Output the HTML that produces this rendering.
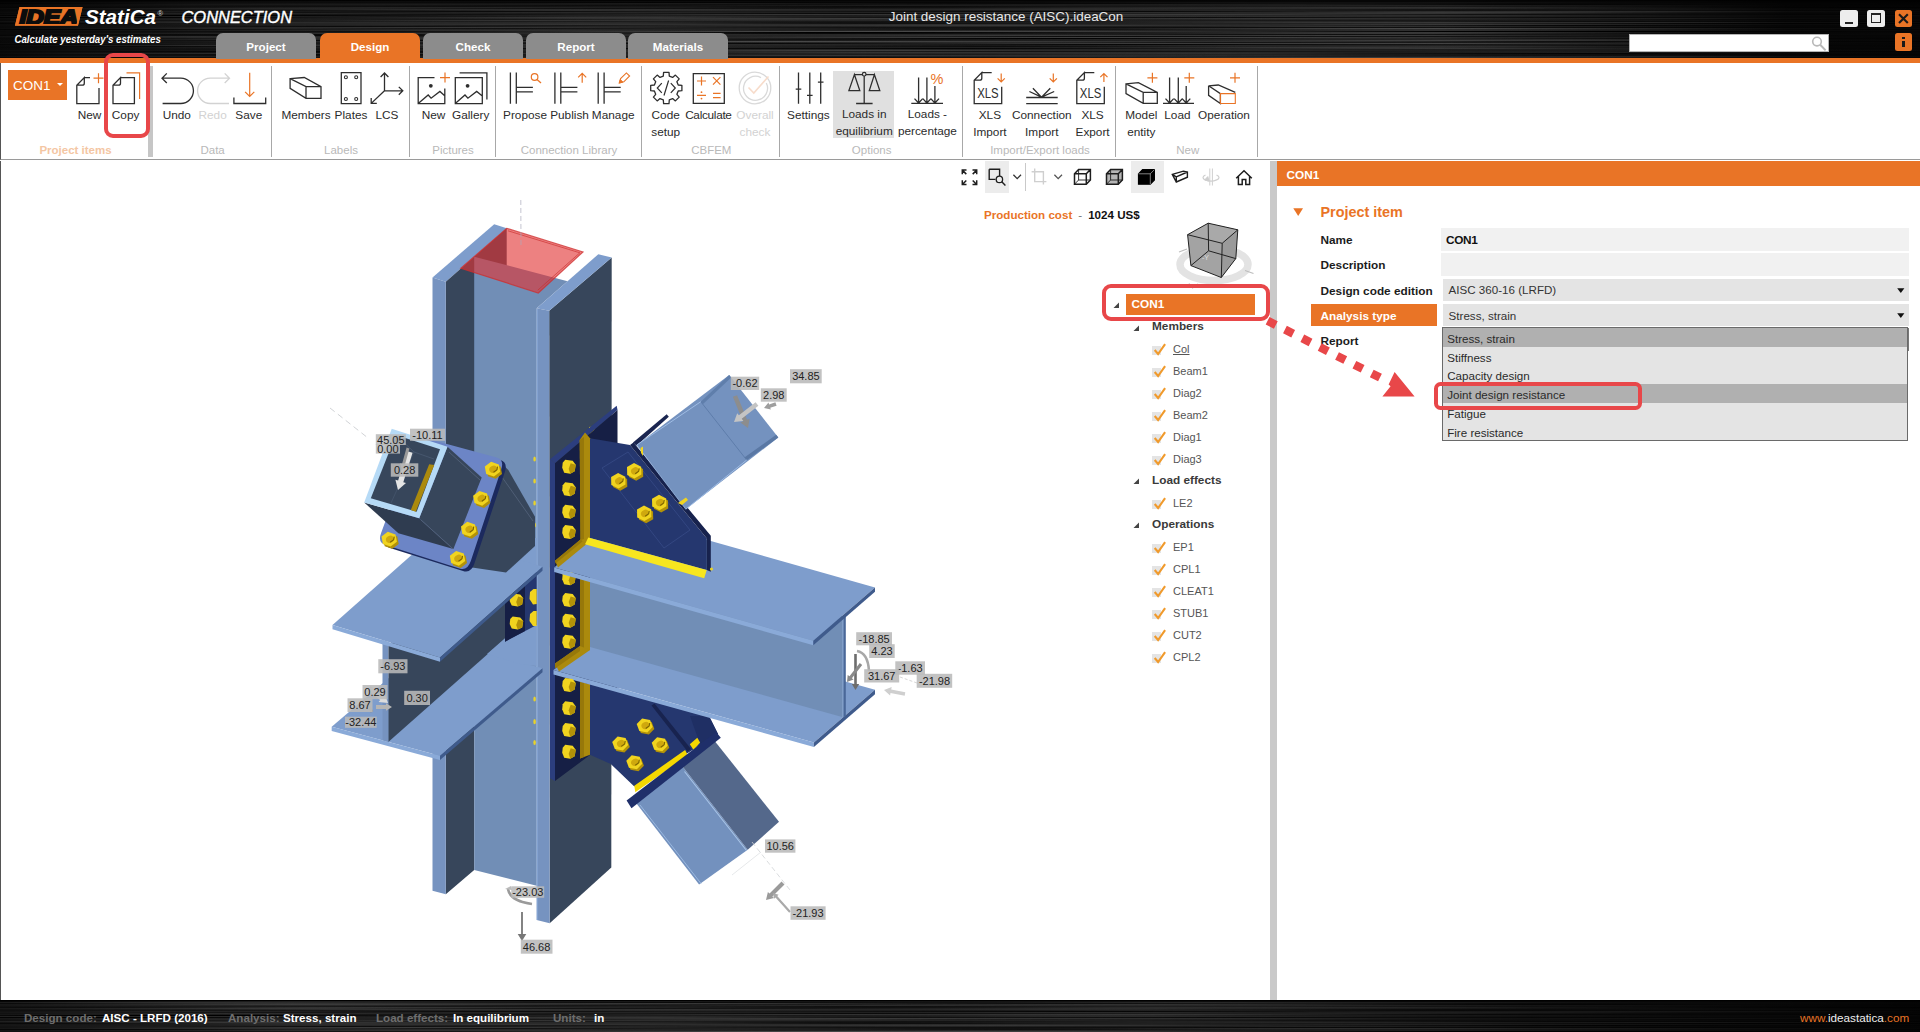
<!DOCTYPE html>
<html lang="en">
<head>
<meta charset="utf-8">
<title>IDEA StatiCa Connection</title>
<style>
*{box-sizing:border-box;margin:0;padding:0}
html,body{width:1920px;height:1032px;overflow:hidden;background:#fff}
body{font-family:"Liberation Sans",sans-serif;font-size:12px;color:#222;position:relative}
.abs{position:absolute}
#app{position:absolute;left:0;top:0;width:1920px;height:1032px;overflow:hidden;background:#fff}
.metal{background-color:#0d0d0d;
 background-image:
  linear-gradient(90deg,rgba(0,0,0,.55) 0,rgba(0,0,0,.15) 12%,rgba(0,0,0,.45) 24%,rgba(0,0,0,.05) 40%,rgba(0,0,0,.35) 52%,rgba(0,0,0,0) 70%,rgba(0,0,0,.1) 80%,rgba(0,0,0,.55) 100%),
  repeating-linear-gradient(180deg,#1f1f1f 0,#161616 1px,#262626 2px,#101010 3px,#1d1d1d 4px,#2a2a2a 5px,#141414 6px,#222 7px)}
#hdr{left:0;top:0;width:1920px;height:58px}
#oband{left:0;top:58px;width:1920px;height:5px;background:#e97426}
.tab{position:absolute;top:33px;height:26px;width:100px;border-radius:7px 7px 0 0;background:#8c8c8c;color:#fff;font-weight:bold;font-size:11.6px;text-align:center;line-height:27.8px}
.tab.on{background:#e97426}
#ribbon{left:0;top:63px;width:1920px;height:97px;background:#fff;border-bottom:1px solid #9a9a9a;border-left:1px solid #555}
.rl{position:absolute;font-size:11.8px;color:#2b2b2b;white-space:nowrap;text-align:center;transform:translateX(-50%);line-height:17px}
.rl.dis{color:#d2d2d2}
.gl{position:absolute;top:143px;font-size:11.5px;color:#b9b9b9;white-space:nowrap;transform:translateX(-50%);line-height:14px}
.vsep{position:absolute;top:65.5px;height:91.5px;width:1px;background:#a8a8a8}
#status{left:0;top:1000px;width:1920px;height:32px}
.st{position:absolute;top:1010px;font-size:11.6px;line-height:15px;font-weight:bold;white-space:nowrap}
.st.k{color:#6e6e6e}.st.v{color:#fff}
.tb{font-size:11.8px;font-weight:bold;line-height:16px;white-space:nowrap}
.ti{font-size:11px;line-height:16px;white-space:nowrap;color:#555}
.dd{font-size:11.6px;line-height:16px;white-space:nowrap;color:#333}
</style>
</head>
<body>
<div id="app">
<!-- HEADER -->
<div id="hdr" class="abs" style="background:#0a0a0a"></div>
<svg class="abs" style="left:0;top:0" width="1920" height="58"><defs><filter id="bm" x="0" y="0" width="100%" height="100%" color-interpolation-filters="sRGB"><feTurbulence type="fractalNoise" baseFrequency="0.0016 0.85" numOctaves="2" seed="7"/><feColorMatrix type="matrix" values="0.5 0 0 0 -0.1  0.5 0 0 0 -0.1  0.5 0 0 0 -0.1  0 0 0 0 1"/></filter>
<linearGradient id="hg" x1="0" x2="1" y1="0" y2="0"><stop offset="0" stop-color="#000" stop-opacity=".75"/><stop offset=".1" stop-color="#000" stop-opacity=".35"/><stop offset=".3" stop-color="#000" stop-opacity=".05"/><stop offset=".75" stop-color="#000" stop-opacity=".0"/><stop offset=".86" stop-color="#000" stop-opacity=".45"/><stop offset=".93" stop-color="#000" stop-opacity=".8"/><stop offset="1" stop-color="#000" stop-opacity=".85"/></linearGradient>
<linearGradient id="hv" x1="0" x2="0" y1="0" y2="1"><stop offset="0" stop-color="#000" stop-opacity=".95"/><stop offset=".06" stop-color="#000" stop-opacity=".55"/><stop offset=".18" stop-color="#000" stop-opacity="0"/><stop offset="1" stop-color="#000" stop-opacity="0.1"/></linearGradient></defs>
<rect width="1920" height="58" filter="url(#bm)"/><rect width="1920" height="58" fill="url(#hg)"/><rect width="1920" height="58" fill="url(#hv)"/></svg>
<div id="oband" class="abs"></div>
<div class="tab" style="left:216px">Project</div>
<div class="tab on" style="left:320px">Design</div>
<div class="tab" style="left:423px">Check</div>
<div class="tab" style="left:526px">Report</div>
<div class="tab" style="left:628px">Materials</div>
<div class="abs" style="left:0;width:1920px;top:8.3px;text-align:center;color:#e8e8e8;font-size:13.45px;line-height:18px;padding-left:92px">Joint design resistance (AISC).ideaCon</div>
<svg class="abs" style="left:0;top:0" width="320" height="58" viewBox="0 0 320 58">
<path d="M19.5 7L82.5 7L78 25.6L15 25.6Z" fill="#e97426"/>
<text x="19.4" y="23.5" font-family="Liberation Sans,sans-serif" font-weight="bold" font-style="italic" font-size="19.4" fill="#0c0c0c" stroke="#0c0c0c" stroke-width="2" stroke-linejoin="miter" textLength="58.5" lengthAdjust="spacingAndGlyphs">IDEA</text>
<path d="M20.2 7.8L81.5 7.8L77.3 24.8L16 24.8Z" fill="none" stroke="#e97426" stroke-width="1.7"/>
<text x="85" y="23.8" font-family="Liberation Sans,sans-serif" font-weight="bold" font-style="italic" font-size="20" fill="#fff" textLength="71" lengthAdjust="spacingAndGlyphs">StatiCa</text>
<text x="157.5" y="15.5" font-family="Liberation Sans,sans-serif" font-size="7.5" fill="#ddd">®</text>
<text x="181.5" y="22.6" font-family="Liberation Sans,sans-serif" font-style="italic" font-size="16.6" fill="#fff" stroke="#fff" stroke-width="0.4" textLength="110.5" lengthAdjust="spacingAndGlyphs">CONNECTION</text>
<text x="14.4" y="42.6" font-family="Liberation Sans,sans-serif" font-weight="bold" font-style="italic" font-size="10.4" fill="#fff" textLength="146.5" lengthAdjust="spacingAndGlyphs">Calculate yesterday's estimates</text>
</svg>

<div class="abs" style="left:1840px;top:10px;width:17.5px;height:17px;background:#ededed;border-radius:2.5px"></div>
<div class="abs" style="left:1844.5px;top:21.5px;width:8.5px;height:2px;background:#222"></div>
<div class="abs" style="left:1867.3px;top:10px;width:17.7px;height:17px;background:#ededed;border-radius:2.5px"></div>
<div class="abs" style="left:1871.3px;top:13.2px;width:10px;height:10px;border:1.6px solid #222;border-top-width:2.6px"></div>
<div class="abs" style="left:1895px;top:10px;width:16.8px;height:17px;background:#e97426;border-radius:2.5px"></div>
<svg class="abs" style="left:1895px;top:10px" width="17" height="17"><path d="M4 4.2L12.8 13M12.8 4.2L4 13" stroke="#1a1a1a" stroke-width="2.1"/></svg>
<div class="abs" style="left:1895px;top:33.3px;width:16.8px;height:17.4px;background:#e97426;border-radius:2.5px"></div>
<div class="abs" style="left:1902.2px;top:40.8px;width:2.4px;height:6.4px;background:#1a1a1a"></div><div class="abs" style="left:1902.2px;top:36.8px;width:2.4px;height:2.4px;background:#1a1a1a"></div>
<div class="abs" style="left:1629.3px;top:34px;width:200px;height:18.4px;background:#fff;border:1px solid #b4b4b4"></div>
<svg class="abs" style="left:1808px;top:34px" width="22" height="19"><circle cx="9" cy="7.6" r="4.3" stroke="#b9b9b9" stroke-width="1.6" fill="none"/><path d="M12.2 10.8L17.6 16.4" stroke="#b9b9b9" stroke-width="2"/></svg>

<!-- RIBBON -->
<div id="ribbon" class="abs"></div>
<!--RIBBON_START-->
<div class="abs" style="left:833px;top:71px;width:61px;height:67px;background:#e0e0e0"></div>
<div class="abs" style="left:8px;top:70px;width:59px;height:29.5px;background:#e97426"></div><div class="abs" style="left:13px;top:77px;font-size:13.5px;color:#fff;line-height:17px">CON1</div><div class="abs" style="left:56.5px;top:83px;width:0;height:0;border-left:3px solid transparent;border-right:3px solid transparent;border-top:3.5px solid #fff"></div>
<div class="abs" style="left:148px;top:66px;width:4.5px;height:91px;background:#c6c6c6"></div>
<div class="vsep" style="left:271.0px"></div>
<div class="vsep" style="left:408.8px"></div>
<div class="vsep" style="left:494.7px"></div>
<div class="vsep" style="left:640.7px"></div>
<div class="vsep" style="left:778.6px"></div>
<div class="vsep" style="left:962.0px"></div>
<div class="vsep" style="left:1115.3px"></div>
<div class="vsep" style="left:1256.5px"></div>
<svg class="abs" style="left:0;top:0" width="1920" height="165" viewBox="0 0 1920 165" stroke-linecap="butt">
<path d="M84.3 77.6H90M99 88V103.7H76.8V85.2L84.3 77.6V83.2Q84.3 85.2 82.3 85.2H76.8" stroke="#2e2e2e" stroke-width="1.3" fill="none" />
<path d="M93.5 78.2H103.5M98.5 73.2V83.2" stroke="#e97426" stroke-width="1.2" fill="none" />
<path d="M120.5 77.6H134.4V103.7H113V85.2L120.5 77.6V83.2Q120.5 85.2 118.5 85.2H113" stroke="#2e2e2e" stroke-width="1.3" fill="none" />
<path d="M126.5 72.8H139.6V99" stroke="#e97426" stroke-width="1.2" fill="none" />
<path d="M162 78.2H180.8A12.65 12.65 0 0 1 180.8 103.5H162.6M166.8 73.4L162 78.2L166.8 83" stroke="#2e2e2e" stroke-width="1.3" fill="none" />
<path d="M229.5 78.2H210.2A12.65 12.65 0 0 0 210.2 103.5H229M224.7 73.4L229.5 78.2L224.7 83" stroke="#d2d2d2" stroke-width="1.3" fill="none" />
<path d="M233.9 97.6V103.5H265.7V97.6" stroke="#2e2e2e" stroke-width="1.3" fill="none" />
<path d="M249.7 72.8V96.4M245.1 91.80000000000001L249.7 96.4L254.29999999999998 91.80000000000001" stroke="#e97426" stroke-width="1.2" fill="none" />
<path d="M290.1 78.7L304.3 77.5L321 86.7V98.4H306L290.1 88.4ZM290.1 78.7L306 86.7H321M306 86.7V98.4" stroke="#2e2e2e" stroke-width="1.3" fill="none" />
<path d="M341.3 72.6H361V103.6H341.3Z" stroke="#2e2e2e" stroke-width="1.3" fill="none" />
<circle cx="345.9" cy="77.3" r="1.5" stroke="#2e2e2e" stroke-width="1.1" fill="none"/>
<circle cx="345.9" cy="99" r="1.5" stroke="#2e2e2e" stroke-width="1.1" fill="none"/>
<circle cx="356.2" cy="77.3" r="1.5" stroke="#2e2e2e" stroke-width="1.1" fill="none"/>
<circle cx="356.2" cy="99" r="1.5" stroke="#2e2e2e" stroke-width="1.1" fill="none"/>
<path d="M384.5 90.8V73M380.6 77L384.5 73L388.4 77M384.5 90.8H402.8M398.8 86.9L402.8 90.8L398.8 94.7M384.5 90.8L371.2 103.4M371.2 98L371.2 103.4L376.8 103.4" stroke="#2e2e2e" stroke-width="1.3" fill="none" />
<path d="M434.5 77.6H418.2V103.7H444.8V88.5M418.8 103L428.2 95L431.1 98.2L439.9 91.4L444.7 95.7" stroke="#2e2e2e" stroke-width="1.3" fill="none" />
<circle cx="430.8" cy="85.8" r="1.9" fill="#2e2e2e"/>
<path d="M440 77.6H450M445 72.6V82.6" stroke="#e97426" stroke-width="1.2" fill="none" />
<path d="M455.3 77.6H482.3V103.7H455.3ZM455.8 103L465 95L467.9 98.2L476.7 91.4L482 95.7M459.6 72.8H486.9V99.4" stroke="#2e2e2e" stroke-width="1.3" fill="none" />
<circle cx="467.6" cy="85.8" r="1.9" fill="#2e2e2e"/>
<path d="M510.4 72.4V103.7M516.3 72.4V103.7M516.3 87.4H532.9M516.3 91.8H532.9" stroke="#2e2e2e" stroke-width="1.3" fill="none" />
<path d="M554.9 72.4V103.7M560.8 72.4V103.7M560.8 87.4H577.4M560.8 91.8H577.4" stroke="#2e2e2e" stroke-width="1.3" fill="none" />
<path d="M598.2 72.4V103.7M604.1 72.4V103.7M604.1 87.4H620.7M604.1 91.8H620.7" stroke="#2e2e2e" stroke-width="1.3" fill="none" />
<circle cx="534.6" cy="77" r="3.3" stroke="#e97426" stroke-width="1.2" fill="none"/>
<path d="M537 79.4L541 83" stroke="#e97426" stroke-width="1.3" fill="none" />
<path d="M582.2 82.8V73.4M578.2 77.4L582.2 73.4L586.2 77.4" stroke="#e97426" stroke-width="1.2" fill="none" />
<path d="M619.3 83L620.6 78.6L626.4 72.9L629.6 76L623.8 81.8Z" stroke="#e97426" stroke-width="1.1" fill="none" />
<path d="M619.3 83L620.3 79.6L622.8 82Z" stroke="#e97426" stroke-width="1" fill="#e97426" />
<path d="M663.3 76.1 L663.6 72.4 L669.0 72.4 L669.3 76.1 L672.6 77.4 L675.4 75.1 L679.2 78.9 L676.9 81.7 L678.2 85.0 L681.9 85.3 L681.9 90.7 L678.2 91.0 L676.9 94.3 L679.2 97.1 L675.4 100.9 L672.6 98.6 L669.3 99.9 L669.0 103.6 L663.6 103.6 L663.3 99.9 L660.0 98.6 L657.2 100.9 L653.4 97.1 L655.7 94.3 L654.4 91.0 L650.7 90.7 L650.7 85.3 L654.4 85.0 L655.7 81.7 L653.4 78.9 L657.2 75.1 L660.0 77.4Z" stroke="#2e2e2e" stroke-width="1.3" fill="none" stroke-linejoin="round"/>
<path d="M661.8 83.2L657.3 88L661.8 92.8M670.8 83.2L675.3 88L670.8 92.8M668.6 80.5L664 95.5" stroke="#2e2e2e" stroke-width="1.2" fill="none" />
<path d="M693.3 73.6H724.3V103.3H693.3Z" stroke="#2e2e2e" stroke-width="1.3" fill="none" />
<path d="M697 81H706M701.5 76.5V85.5M713 77.2L720.4 84.6M720.4 77.2L713 84.6M697 95.4H706M713 93.4H720.6M713 97.6H720.6" stroke="#e97426" stroke-width="1.2" fill="none" />
<circle cx="701.5" cy="92.2" r="0.9" fill="#e97426"/><circle cx="701.5" cy="98.6" r="0.9" fill="#e97426"/>
<circle cx="755" cy="88" r="15.8" stroke="#d9d9d9" stroke-width="1.3" fill="none"/>
<path d="M766.3 83A12 12 0 1 1 761 77.6" stroke="#d9d9d9" stroke-width="1.3" fill="none" />
<path d="M748.5 87.5L753.8 93L768.5 76.5" stroke="#f7dccb" stroke-width="1.6" fill="none" />
<path d="M798.5 72.4V103.7M809.8 72.4V103.7M820.7 72.4V103.7M795.7 89.2H801.3M807 95.4H812.6M817.9 82.2H823.5" stroke="#2e2e2e" stroke-width="1.3" fill="none" />
<path d="M854.4 74.6H874.4M864.2 76V103.3M856.1 103.5H872.6M854.4 74.6L848.9 90.6H859.8ZM874.4 74.6L869.3 90.6H879.8Z" stroke="#2e2e2e" stroke-width="1.3" fill="none" />
<circle cx="864.2" cy="74.2" r="1.8" stroke="#2e2e2e" stroke-width="1.2" fill="#e0e0e0"/>
<path d="M911.3000000000001 103.4H943.0M918.6 77.5V103M914.5 98.6L918.6 103L922.7 98.6M926.9 77.5V103M922.8 98.6L926.9 103L931.0 98.6M934.9 86V103M930.8 98.6L934.9 103L939.0 98.6" stroke="#2e2e2e" stroke-width="1.3" fill="none" />
<text x="930.6" y="83.6" font-size="14.5" fill="#e97426" font-family="Liberation Sans,sans-serif">%</text>
<path d="M981.8000000000001 72.6H991.7M1001.7 86.8V103.6H974.2V80.2L981.8000000000001 72.6V78.2Q981.8000000000001 80.2 979.8000000000001 80.2H974.2" stroke="#2e2e2e" stroke-width="1.3" fill="none" />
<text x="977.2" y="98.2" font-size="14" fill="#2e2e2e" font-family="Liberation Sans,sans-serif" textLength="21.5" lengthAdjust="spacingAndGlyphs">XLS</text>
<path d="M1001.2 73.6V82M997.6 78.4L1001.2 82L1004.8000000000001 78.4" stroke="#e97426" stroke-width="1.2" fill="none" />
<path d="M1084.3999999999999 72.6H1094.3M1104.3 86.8V103.6H1076.8V80.2L1084.3999999999999 72.6V78.2Q1084.3999999999999 80.2 1082.3999999999999 80.2H1076.8" stroke="#2e2e2e" stroke-width="1.3" fill="none" />
<text x="1079.8" y="98.2" font-size="14" fill="#2e2e2e" font-family="Liberation Sans,sans-serif" textLength="21.5" lengthAdjust="spacingAndGlyphs">XLS</text>
<path d="M1103.8999999999999 82V73.6M1100.3 77.19999999999999L1103.8999999999999 73.6L1107.4999999999998 77.19999999999999" stroke="#e97426" stroke-width="1.2" fill="none" />
<path d="M1026.2 97.5H1057.7M1026.2 103.6H1057.7M1041.5 97.2L1029.4 91.5M1041.5 97.2L1032.9 88.2M1041.5 97.2L1050.3 88.2M1041.5 97.2L1054.2 91.5" stroke="#2e2e2e" stroke-width="1.3" fill="none" />
<path d="M1053.3 73.6V82M1049.7 78.4L1053.3 82L1056.8999999999999 78.4" stroke="#e97426" stroke-width="1.2" fill="none" />
<path d="M1126 83.9L1138.4 82.6L1157.3 92.3V103.4H1143.2L1126 93.6ZM1126 83.9L1143.2 92.3H1157.3M1143.2 92.3V103.4" stroke="#2e2e2e" stroke-width="1.3" fill="none" />
<path d="M1147.4 77.8H1157.4M1152.4 72.8V82.8" stroke="#e97426" stroke-width="1.2" fill="none" />
<path d="M1163 103.4H1194M1169.6 77.5V103M1165.5 98.6L1169.6 103L1173.6999999999998 98.6M1178.3 77.5V103M1174.2 98.6L1178.3 103L1182.3999999999999 98.6M1186.2 86V103M1182.1000000000001 98.6L1186.2 103L1190.3 98.6" stroke="#2e2e2e" stroke-width="1.3" fill="none" />
<path d="M1184.3 77.8H1194.3M1189.3 72.8V82.8" stroke="#e97426" stroke-width="1.2" fill="none" />
<path d="M1208.6 85.8L1218.3 85L1235.3 92.3M1208.6 85.8V95.4L1220.4 103.5V93.6L1208.6 85.8" stroke="#2e2e2e" stroke-width="1.3" fill="none" />
<path d="M1220.4 93.6H1235.3V103.5H1220.4Z" stroke="#e97426" stroke-width="1.1" fill="none" />
<path d="M1230 77.8H1240M1235 72.8V82.8" stroke="#e97426" stroke-width="1.2" fill="none" />
</svg>
<div class="rl" style="left:89.5px;top:106.5px">New</div>
<div class="rl" style="left:125.6px;top:106.5px">Copy</div>
<div class="rl" style="left:176.8px;top:106.5px">Undo</div>
<div class="rl dis" style="left:212.6px;top:106.5px">Redo</div>
<div class="rl" style="left:248.8px;top:106.5px">Save</div>
<div class="rl" style="left:306px;top:106.5px">Members</div>
<div class="rl" style="left:351px;top:106.5px">Plates</div>
<div class="rl" style="left:387px;top:106.5px">LCS</div>
<div class="rl" style="left:433.5px;top:106.5px">New</div>
<div class="rl" style="left:470.7px;top:106.5px">Gallery</div>
<div class="rl" style="left:525px;top:106.5px">Propose</div>
<div class="rl" style="left:569.5px;top:106.5px">Publish</div>
<div class="rl" style="left:613.2px;top:106.5px">Manage</div>
<div class="rl" style="left:665.7px;top:106.5px">Code<br>setup</div>
<div class="rl" style="left:708.4px;top:106.5px"><span style="letter-spacing:-0.3px">Calculate</span></div>
<div class="rl dis" style="left:755px;top:106.5px">Overall<br>check</div>
<div class="rl" style="left:808.4px;top:106.5px">Settings</div>
<div class="rl" style="left:864.2px;top:106px">Loads in<br>equilibrium</div>
<div class="rl" style="left:927.4px;top:106px">Loads -<br>percentage</div>
<div class="rl" style="left:989.9px;top:106.5px">XLS<br>Import</div>
<div class="rl" style="left:1041.8px;top:106.5px">Connection<br>Import</div>
<div class="rl" style="left:1092.6px;top:106.5px">XLS<br>Export</div>
<div class="rl" style="left:1141.3px;top:106.5px">Model<br>entity</div>
<div class="rl" style="left:1177.4px;top:106.5px">Load</div>
<div class="rl" style="left:1224px;top:106.5px">Operation</div>
<div class="gl" style="left:75.5px;color:#f4c6a3;font-weight:bold">Project items</div>
<div class="gl" style="left:212.6px">Data</div>
<div class="gl" style="left:341px">Labels</div>
<div class="gl" style="left:453px">Pictures</div>
<div class="gl" style="left:569px">Connection Library</div>
<div class="gl" style="left:711.3px">CBFEM</div>
<div class="gl" style="left:871.7px">Options</div>
<div class="gl" style="left:1040px">Import/Export loads</div>
<div class="gl" style="left:1187.7px">New</div>
<!--RIBBON_END-->
<!-- MAIN -->
<!--VIEWPORT_START-->
<svg class="abs" style="left:300px;top:190px" width="700" height="790" viewBox="300 190 700 790" shape-rendering="geometricPrecision">
<polygon points="432.5,277.5 494.2,224.2 506.7,228.3 445.8,281.7" fill="#7e9dcc" />
<polygon points="445.8,281.7 506.7,228.3 506.7,600.0 474.2,600.0 474.2,870.0 445.8,894.2" fill="#37465b" />
<polygon points="432.5,277.5 445.8,281.7 445.8,894.2 432.5,890.8" fill="#7693c0" />
<polygon points="474.2,256.7 567.5,281.2 536.7,308.3 536.7,885.8 474.2,870.0" fill="#718eb6" />
<polygon points="549.2,310.8 611.7,257.5 611.3,867.5 549.7,923.3" fill="#37465b" />
<polygon points="536.7,308.3 549.2,310.8 611.7,257.5 598.3,254.2" fill="#7e9dcc" />
<polygon points="536.7,308.3 549.2,310.8 549.7,923.3 536.7,920.0" fill="#7693c0" />
<polyline points="537.2,309.0 537.2,920.0" fill="none" stroke="#8fb0dd" stroke-width="0.8" />
<ellipse cx="534.6" cy="459" rx="1.3" ry="2.6" fill="#e8d22a"/>
<ellipse cx="534.6" cy="481" rx="1.3" ry="2.6" fill="#e8d22a"/>
<ellipse cx="534.6" cy="503" rx="1.3" ry="2.6" fill="#e8d22a"/>
<ellipse cx="534.6" cy="525" rx="1.3" ry="2.6" fill="#e8d22a"/>
<ellipse cx="534.6" cy="699" rx="1.3" ry="2.6" fill="#e8d22a"/>
<ellipse cx="534.6" cy="721.7" rx="1.3" ry="2.6" fill="#e8d22a"/>
<ellipse cx="534.6" cy="742.5" rx="1.3" ry="2.6" fill="#e8d22a"/>
<polygon points="506.7,228.3 583.0,251.9 538.3,293.0 460.8,268.3" fill="rgba(226,52,52,0.62)" stroke="rgba(205,45,45,0.75)" stroke-width="1.2"/>
<polyline points="508.0,230.8 579.8,252.8 537.8,290.2" fill="none" stroke="rgba(200,40,40,0.6)" stroke-width="1" />
<polyline points="520.8,200.0 521.0,247.0" fill="none" stroke="#aab" stroke-width="0.7" stroke-dasharray="5 3"/>
<polygon points="331.7,726.7 440.0,755.8 542.5,668.3 434.2,639.2" fill="#7e9dcc" />
<polygon points="331.7,726.7 440.0,755.8 440.0,760.0 331.7,731.0" fill="#8aaad8" />
<polygon points="440.0,755.8 542.5,668.3 542.5,672.3 440.0,760.0" fill="#3f5b8c" />
<polygon points="388.3,645.0 505.0,545.0 505.0,638.7 388.3,742.0" fill="#37465b" />
<polygon points="382.5,640.0 388.3,642.0 388.3,742.0 382.5,740.3" fill="#7693c0" />
<polygon points="487.0,654.0 505.0,638.2 536.7,624.0 536.7,666.0 520.0,664.0" fill="#7e9dcc" />
<polygon points="505.0,580.0 536.7,572.0 536.7,625.0 505.0,641.7" fill="#25376f" />
<polygon points="505.0,580.0 525.0,575.0 525.0,631.0 505.0,641.7" fill="#161f45" />
<polygon points="512.7,593.4 520.2,594.4 523.2,598.0 522.2,604.5 517.7,606.6 511.7,605.6 509.7,601.0 510.2,596.0" fill="#f1d41f" />
<polygon points="518.2,596.5 523.2,598.0 522.2,604.5 517.7,606.6 516.2,602.0" fill="#b39208" />
<polygon points="512.7,616.4 520.2,617.4 523.2,621.0 522.2,627.5 517.7,629.6 511.7,628.6 509.7,624.0 510.2,619.0" fill="#f1d41f" />
<polygon points="518.2,619.5 523.2,621.0 522.2,627.5 517.7,629.6 516.2,625.0" fill="#b39208" />
<polygon points="530.0,592.0 533.5,589.0 536.7,589.0 536.7,604.0 533.0,604.5 529.5,599.0" fill="#f1d41f" />
<polygon points="530.0,614.0 533.5,611.0 536.7,611.0 536.7,626.0 533.0,626.0 529.5,621.0" fill="#f1d41f" />
<polygon points="476.0,538.0 536.7,538.0 536.7,566.0 476.0,548.0" fill="#7e9dcc" />
<polygon points="332.5,625.0 440.0,657.5 542.5,566.7 435.0,534.2" fill="#7e9dcc" />
<polygon points="332.5,625.0 440.0,657.5 440.0,661.7 332.5,629.2" fill="#8aaad8" />
<polygon points="440.0,657.5 542.5,566.7 542.5,570.7 440.0,661.7" fill="#3f5b8c" />
<polygon points="500.0,462.0 508.3,470.0 535.0,516.7 535.0,546.0 506.0,572.5 462.0,566.0" fill="#37465b" />
<polyline points="497.0,470.0 533.0,521.0" fill="none" stroke="#55657c" stroke-width="0.8" />
<path d="M417.0 448.2Q420.6 438.6 428.5 440.7L500.2 460.0Q508.1 462.1 504.8 472.1L474.4 563.6Q471.1 573.6 463.0 571.0L389.2 547.7Q381.1 545.1 384.7 535.5Z" fill="#1c2a5e"/>
<path d="M413.4 445.6Q417.0 436.0 424.9 438.1L496.6 457.4Q504.5 459.5 501.2 469.5L470.8 561.0Q467.5 571.0 459.4 568.4L385.6 545.1Q377.5 542.5 381.1 532.9Z" fill="#6c85c6"/>
<polygon points="364.2,502.5 419.2,518.3 453.4,549.1 398.4,533.3" fill="#2f3c50" />
<polygon points="447.5,446.7 481.7,477.5 453.4,549.1 419.2,518.3" fill="#37465b" />
<polyline points="449.0,452.0 480.0,480.0" fill="none" stroke="#55657c" stroke-width="0.8" />
<polyline points="421.0,520.0 453.0,549.0" fill="none" stroke="#55657c" stroke-width="0.8" />
<polygon points="391.7,428.7 447.5,446.7 419.2,518.3 364.2,502.5" fill="#b6daf6" />
<polygon points="395.8,435.0 440.0,449.2 416.7,511.7 370.8,498.3" fill="#37465b" />
<polygon points="429.2,464.2 434.2,465.0 415.8,511.7 410.8,510.0" fill="#ab8a0d" />
<polyline points="397.0,436.0 414.0,452.0 434.0,459.0" fill="none" stroke="#4a5a72" stroke-width="0.8" />
<polyline points="414.0,452.0 391.0,503.0" fill="none" stroke="#4a5a72" stroke-width="0.6" />
<polygon points="502.0,474.0 495.7,478.8 488.0,476.2 486.6,468.8 492.9,464.0 500.6,466.6" fill="#b39208" />
<polygon points="500.2,471.8 493.9,476.6 486.2,474.0 484.8,466.6 491.1,461.8 498.8,464.4" fill="#f1d41f" />
<ellipse cx="493.1" cy="469.6" rx="4.1" ry="3.4" fill="#cfa80e" transform="rotate(-30 492.5 469.2)"/>
<path d="M493.5 472.2l3.5 -2.5l0.5 -3" stroke="#7d6500" stroke-width="1.1" fill="none"/>
<polygon points="490.3,503.1 484.0,507.9 476.3,505.3 474.9,497.9 481.2,493.1 488.9,495.7" fill="#b39208" />
<polygon points="488.5,500.9 482.2,505.7 474.5,503.1 473.1,495.7 479.4,490.9 487.1,493.5" fill="#f1d41f" />
<ellipse cx="481.4" cy="498.7" rx="4.1" ry="3.4" fill="#cfa80e" transform="rotate(-30 480.8 498.3)"/>
<path d="M481.8 501.3l3.5 -2.5l0.5 -3" stroke="#7d6500" stroke-width="1.1" fill="none"/>
<polygon points="478.2,534.0 471.9,538.8 464.2,536.2 462.8,528.8 469.1,524.0 476.8,526.6" fill="#b39208" />
<polygon points="476.4,531.8 470.1,536.6 462.4,534.0 461.0,526.6 467.3,521.8 475.0,524.4" fill="#f1d41f" />
<ellipse cx="469.3" cy="529.6" rx="4.1" ry="3.4" fill="#cfa80e" transform="rotate(-30 468.7 529.2)"/>
<path d="M469.7 532.2l3.5 -2.5l0.5 -3" stroke="#7d6500" stroke-width="1.1" fill="none"/>
<polygon points="467.0,563.1 460.7,567.9 453.0,565.3 451.6,557.9 457.9,553.1 465.6,555.7" fill="#b39208" />
<polygon points="465.2,560.9 458.9,565.7 451.2,563.1 449.8,555.7 456.1,550.9 463.8,553.5" fill="#f1d41f" />
<ellipse cx="458.1" cy="558.7" rx="4.1" ry="3.4" fill="#cfa80e" transform="rotate(-30 457.5 558.3)"/>
<path d="M458.5 561.3l3.5 -2.5l0.5 -3" stroke="#7d6500" stroke-width="1.1" fill="none"/>
<polygon points="398.7,544.0 392.4,548.8 384.7,546.2 383.3,538.8 389.6,534.0 397.3,536.6" fill="#b39208" />
<polygon points="396.9,541.8 390.6,546.6 382.9,544.0 381.5,536.6 387.8,531.8 395.5,534.4" fill="#f1d41f" />
<ellipse cx="389.8" cy="539.6" rx="4.1" ry="3.4" fill="#cfa80e" transform="rotate(-30 389.2 539.2)"/>
<path d="M390.2 542.2l3.5 -2.5l0.5 -3" stroke="#7d6500" stroke-width="1.1" fill="none"/>
<polyline points="330.0,408.0 368.0,438.0" fill="none" stroke="#c5c8cc" stroke-width="0.8" stroke-dasharray="6 4"/>
<polygon points="603.5,426.8 611.0,427.8 614.0,431.0 613.0,437.5 608.5,439.2 602.5,438.2 600.5,434.0 601.0,429.0" fill="#f1d41f" />
<polygon points="609.0,429.5 614.0,431.0 613.0,437.5 608.5,439.2 607.0,435.0" fill="#b39208" />
<polygon points="589.0,427.0 594.0,426.5 595.0,433.0 590.0,435.0" fill="#f1d41f" />
<polygon points="550.0,459.2 616.7,405.8 617.5,410.0 555.0,463.3" fill="#2c3e7e" />
<polygon points="555.0,463.3 617.5,410.0 617.5,740.0 590.0,755.0 555.0,781.0" fill="#161f45" />
<polygon points="550.0,459.2 555.0,463.3 555.0,781.0 550.0,778.3" fill="#2c3e7e" />
<polygon points="590.0,680.0 709.0,716.0 718.0,734.0 634.3,786.5 610.8,764.0 590.0,754.7" fill="#25376f" />
<polygon points="651.5,705.5 654.5,703.5 691.0,749.0 687.5,751.5" fill="#18234f" />
<polygon points="690.0,716.0 709.0,716.0 718.0,734.0 700.0,744.0" fill="#1f2f64" />
<polygon points="580.0,682.0 590.0,684.0 590.0,754.7 580.0,758.5" fill="#ab8a0d" />
<polygon points="580.0,682.0 584.0,682.5 584.0,757.0 580.0,758.5" fill="#97780a" />
<polygon points="654.3,729.0 648.9,734.5 640.9,733.0 638.3,726.0 643.7,720.5 651.7,722.0" fill="#b39208" />
<polygon points="652.7,727.0 647.3,732.5 639.3,731.0 636.7,724.0 642.1,718.5 650.1,720.0" fill="#f1d41f" />
<ellipse cx="645.3" cy="725.9" rx="4.1" ry="3.4" fill="#cfa80e" transform="rotate(-30 644.7 725.5)"/>
<path d="M645.7 728.5l3.5 -2.5l0.5 -3" stroke="#7d6500" stroke-width="1.1" fill="none"/>
<polygon points="629.8,746.9 624.4,752.4 616.4,750.9 613.8,743.9 619.2,738.4 627.2,739.9" fill="#b39208" />
<polygon points="628.2,744.9 622.8,750.4 614.8,748.9 612.2,741.9 617.6,736.4 625.6,737.9" fill="#f1d41f" />
<ellipse cx="620.8" cy="743.8" rx="4.1" ry="3.4" fill="#cfa80e" transform="rotate(-30 620.2 743.4)"/>
<path d="M621.2 746.4l3.5 -2.5l0.5 -3" stroke="#7d6500" stroke-width="1.1" fill="none"/>
<polygon points="669.3,747.8 663.9,753.3 655.9,751.8 653.3,744.8 658.7,739.3 666.7,740.8" fill="#b39208" />
<polygon points="667.7,745.8 662.3,751.3 654.3,749.8 651.7,742.8 657.1,737.3 665.1,738.8" fill="#f1d41f" />
<ellipse cx="660.3" cy="744.7" rx="4.1" ry="3.4" fill="#cfa80e" transform="rotate(-30 659.7 744.3)"/>
<path d="M660.7 747.3l3.5 -2.5l0.5 -3" stroke="#7d6500" stroke-width="1.1" fill="none"/>
<polygon points="643.9,765.7 638.5,771.2 630.5,769.7 627.9,762.7 633.3,757.2 641.3,758.7" fill="#b39208" />
<polygon points="642.3,763.7 636.9,769.2 628.9,767.7 626.3,760.7 631.7,755.2 639.7,756.7" fill="#f1d41f" />
<ellipse cx="634.9" cy="762.6" rx="4.1" ry="3.4" fill="#cfa80e" transform="rotate(-30 634.3 762.2)"/>
<path d="M635.3 765.2l3.5 -2.5l0.5 -3" stroke="#7d6500" stroke-width="1.1" fill="none"/>
<polygon points="632.4,798.2 681.0,764.4 747.7,849.8 699.1,884.4" fill="#7391be" />
<polygon points="681.0,764.4 713.1,739.0 779.0,821.8 747.7,849.8" fill="#54688b" />
<polyline points="640.0,805.0 701.0,883.5" fill="none" stroke="#9dbbe2" stroke-width="0.9" />
<polyline points="684.5,771.5 746.5,850.5" fill="none" stroke="#a9c4e6" stroke-width="1.1" />
<polygon points="689.8,744.3 697.3,737.8 700.1,742.5 693.6,750.0" fill="#f5d800" />
<polygon points="634.3,785.7 685.1,750.0 687.9,755.6 635.3,792.3" fill="#f5d800" />
<polygon points="626.6,800.4 716.1,732.1 720.8,737.8 631.5,808.3" fill="#1f2f6a" />
<polyline points="752.0,842.0 790.0,890.0" fill="none" stroke="#d0d3d6" stroke-width="0.8" stroke-dasharray="5 3"/>
<polyline points="732.0,875.0 761.0,852.0" fill="none" stroke="#e0e2e4" stroke-width="0.8" />
<polygon points="553.5,670.0 614.6,617.3 875.0,689.8 813.9,742.5" fill="#7e9dcc" />
<polygon points="553.5,670.0 813.9,742.5 813.9,747.0 553.5,674.5" fill="#8aaad8" />
<polygon points="813.9,742.5 875.0,689.8 875.0,694.3 813.9,747.0" fill="#3f5b8c" />
<polygon points="590.0,545.0 843.0,616.0 843.0,717.3 590.0,647.0" fill="#718eb6" />
<polygon points="843.0,616.0 845.8,614.5 845.8,716.0 843.0,717.3" fill="#4a6898" />
<polyline points="843.0,616.5 843.0,717.0" fill="none" stroke="#9ab7e0" stroke-width="0.8" />
<polygon points="580.0,578.0 590.0,581.0 590.0,650.0 580.0,653.0" fill="#ab8a0d" />
<polygon points="580.0,578.0 584.0,579.0 584.0,652.0 580.0,653.0" fill="#97780a" />
<polygon points="555.0,663.5 580.0,646.0 590.0,650.0 559.0,671.5" fill="#ab8a0d" />
<polygon points="555.0,663.5 580.0,646.0 580.0,651.0 555.0,668.5" fill="#97780a" />
<polygon points="565.2,571.3 572.7,572.3 575.7,576.3 574.7,582.8 570.2,585.3 564.2,584.3 562.2,579.3 562.7,574.3" fill="#f1d41f" />
<polygon points="570.7,574.8 575.7,576.3 574.7,582.8 570.2,585.3 568.7,580.3" fill="#b39208" />
<polygon points="565.2,593.0 572.7,594.0 575.7,598.0 574.7,604.5 570.2,607.0 564.2,606.0 562.2,601.0 562.7,596.0" fill="#f1d41f" />
<polygon points="570.7,596.5 575.7,598.0 574.7,604.5 570.2,607.0 568.7,602.0" fill="#b39208" />
<polygon points="565.2,613.8 572.7,614.8 575.7,618.8 574.7,625.3 570.2,627.8 564.2,626.8 562.2,621.8 562.7,616.8" fill="#f1d41f" />
<polygon points="570.7,617.3 575.7,618.8 574.7,625.3 570.2,627.8 568.7,622.8" fill="#b39208" />
<polygon points="565.2,634.7 572.7,635.7 575.7,639.7 574.7,646.2 570.2,648.7 564.2,647.7 562.2,642.7 562.7,637.7" fill="#f1d41f" />
<polygon points="570.7,638.2 575.7,639.7 574.7,646.2 570.2,648.7 568.7,643.7" fill="#b39208" />
<polygon points="565.2,678.0 572.7,679.0 575.7,683.0 574.7,689.5 570.2,692.0 564.2,691.0 562.2,686.0 562.7,681.0" fill="#f1d41f" />
<polygon points="570.7,681.5 575.7,683.0 574.7,689.5 570.2,692.0 568.7,687.0" fill="#b39208" />
<polygon points="565.2,701.3 572.7,702.3 575.7,706.3 574.7,712.8 570.2,715.3 564.2,714.3 562.2,709.3 562.7,704.3" fill="#f1d41f" />
<polygon points="570.7,704.8 575.7,706.3 574.7,712.8 570.2,715.3 568.7,710.3" fill="#b39208" />
<polygon points="565.2,723.0 572.7,724.0 575.7,728.0 574.7,734.5 570.2,737.0 564.2,736.0 562.2,731.0 562.7,726.0" fill="#f1d41f" />
<polygon points="570.7,726.5 575.7,728.0 574.7,734.5 570.2,737.0 568.7,732.0" fill="#b39208" />
<polygon points="565.2,744.7 572.7,745.7 575.7,749.7 574.7,756.2 570.2,758.7 564.2,757.7 562.2,752.7 562.7,747.7" fill="#f1d41f" />
<polygon points="570.7,748.2 575.7,749.7 574.7,756.2 570.2,758.7 568.7,753.7" fill="#b39208" />
<polygon points="554.2,567.5 615.9,514.2 875.0,587.5 813.3,640.8" fill="#7e9dcc" />
<polygon points="554.2,567.5 813.3,640.8 813.3,645.3 554.2,572.0" fill="#8aaad8" />
<polygon points="813.3,640.8 875.0,587.5 875.0,591.8 813.3,645.3" fill="#3f5b8c" />
<polygon points="590.0,438.3 630.0,445.0 706.7,538.3 706.7,570.0 588.3,537.5" fill="#25376f" />
<polygon points="630.0,445.0 633.5,442.5 710.8,535.8 710.8,571.7 706.7,570.0 706.7,538.3" fill="#17224d" />
<polygon points="579.7,440.0 585.0,432.5 590.0,438.3 590.0,541.5 585.0,545.0 580.5,542.0" fill="#ab8a0d" />
<polygon points="579.7,440.0 584.0,437.0 584.0,539.0 580.5,540.0" fill="#97780a" />
<polygon points="555.0,560.8 580.8,539.2 586.0,544.5 558.0,567.5" fill="#ab8a0d" />
<polygon points="555.0,560.8 580.8,539.2 582.5,541.5 555.5,563.5" fill="#97780a" />
<polygon points="588.3,537.5 706.7,570.0 704.2,578.3 585.0,544.2" fill="#f7e61f" />
<circle cx="711.5" cy="569" r="1.6" fill="#e8d22a"/>
<polygon points="565.2,459.7 572.7,460.7 575.7,464.7 574.7,471.2 570.2,473.7 564.2,472.7 562.2,467.7 562.7,462.7" fill="#f1d41f" />
<polygon points="570.7,463.2 575.7,464.7 574.7,471.2 570.2,473.7 568.7,468.7" fill="#b39208" />
<polygon points="565.2,482.2 572.7,483.2 575.7,487.2 574.7,493.7 570.2,496.2 564.2,495.2 562.2,490.2 562.7,485.2" fill="#f1d41f" />
<polygon points="570.7,485.7 575.7,487.2 574.7,493.7 570.2,496.2 568.7,491.2" fill="#b39208" />
<polygon points="565.2,504.7 572.7,505.7 575.7,509.7 574.7,516.2 570.2,518.7 564.2,517.7 562.2,512.7 562.7,507.7" fill="#f1d41f" />
<polygon points="570.7,508.2 575.7,509.7 574.7,516.2 570.2,518.7 568.7,513.7" fill="#b39208" />
<polygon points="565.2,525.0 572.7,526.0 575.7,530.0 574.7,536.5 570.2,539.0 564.2,538.0 562.2,533.0 562.7,528.0" fill="#f1d41f" />
<polygon points="570.7,528.5 575.7,530.0 574.7,536.5 570.2,539.0 568.7,534.0" fill="#b39208" />
<polyline points="602.0,468.0 628.0,452.0 690.0,530.0 664.0,548.0 602.0,468.0" fill="none" stroke="#3a4d8a" stroke-width="0.7" />
<polygon points="633.0,442.5 666.7,414.2 668.8,416.8 636.5,445.8" fill="#1a2550" />
<polygon points="636.7,445.0 729.2,375.0 778.3,437.5 685.8,509.2" fill="#7492bf" />
<polygon points="700.8,401.7 729.2,375.0 731.2,377.6 702.8,404.3" fill="#5f7eab" />
<polygon points="744.4,457.4 776.2,434.8 778.3,437.5 746.7,460.3" fill="#5a78a4" />
<polyline points="700.8,401.7 746.7,460.0" fill="none" stroke="#5e7dab" stroke-width="1" />
<polyline points="636.7,445.0 700.8,401.7" fill="none" stroke="#a3c0e6" stroke-width="0.9" />
<polyline points="685.8,509.2 746.7,460.0" fill="none" stroke="#a3c0e6" stroke-width="0.9" />
<polyline points="636.7,445.0 685.8,509.2" fill="none" stroke="#9cb9e0" stroke-width="0.8" />
<polygon points="640.5,448.0 643.0,446.5 643.0,456.0 641.0,453.0" fill="#f1d41f" />
<polygon points="678.0,503.0 686.0,497.5 688.0,500.0 682.0,505.0" fill="#f1d41f" />
<polygon points="627.3,486.7 620.3,490.8 613.1,487.1 612.9,479.3 619.9,475.2 627.1,478.9" fill="#b39208" />
<polygon points="625.5,484.5 618.5,488.6 611.3,484.9 611.1,477.1 618.1,473.0 625.3,476.7" fill="#f1d41f" />
<ellipse cx="618.9" cy="481.2" rx="4.1" ry="3.4" fill="#cfa80e" transform="rotate(-30 618.3 480.8)"/>
<path d="M619.3 483.8l3.5 -2.5l0.5 -3" stroke="#7d6500" stroke-width="1.1" fill="none"/>
<polygon points="643.2,476.7 636.2,480.8 629.0,477.1 628.8,469.3 635.8,465.2 643.0,468.9" fill="#b39208" />
<polygon points="641.4,474.5 634.4,478.6 627.2,474.9 627.0,467.1 634.0,463.0 641.2,466.7" fill="#f1d41f" />
<ellipse cx="634.8" cy="471.2" rx="4.1" ry="3.4" fill="#cfa80e" transform="rotate(-30 634.2 470.8)"/>
<path d="M635.2 473.8l3.5 -2.5l0.5 -3" stroke="#7d6500" stroke-width="1.1" fill="none"/>
<polygon points="653.2,519.2 646.2,523.3 639.0,519.6 638.8,511.8 645.8,507.7 653.0,511.4" fill="#b39208" />
<polygon points="651.4,517.0 644.4,521.1 637.2,517.4 637.0,509.6 644.0,505.5 651.2,509.2" fill="#f1d41f" />
<ellipse cx="644.8" cy="513.7" rx="4.1" ry="3.4" fill="#cfa80e" transform="rotate(-30 644.2 513.3)"/>
<path d="M645.2 516.3l3.5 -2.5l0.5 -3" stroke="#7d6500" stroke-width="1.1" fill="none"/>
<polygon points="668.2,508.4 661.2,512.5 654.0,508.8 653.8,501.0 660.8,496.9 668.0,500.6" fill="#b39208" />
<polygon points="666.4,506.2 659.4,510.3 652.2,506.6 652.0,498.8 659.0,494.7 666.2,498.4" fill="#f1d41f" />
<ellipse cx="659.8" cy="502.9" rx="4.1" ry="3.4" fill="#cfa80e" transform="rotate(-30 659.2 502.5)"/>
<path d="M660.2 505.5l3.5 -2.5l0.5 -3" stroke="#7d6500" stroke-width="1.1" fill="none"/>
<polygon points="732.9,396.8 742.9,421.4 740.4,422.5 748.0,428.0 749.6,418.7 747.1,419.7 737.1,395.2" fill="#8d8d8d" />
<polygon points="755.6,402.2 738.9,415.3 737.2,413.2 734.0,422.0 743.4,421.0 741.7,418.8 758.4,405.8" fill="#c4c4c4" />
<polygon points="775.4,402.3 769.1,404.4 768.5,402.6 764.0,408.0 770.9,409.6 770.2,407.8 776.6,405.7" fill="#9e9e9e" />
<polygon points="407.4,451.2 398.1,480.6 395.4,479.7 398.0,490.0 406.0,483.1 403.3,482.2 412.6,452.8" fill="#e4e4e4" />
<polygon points="406.6,447.6 402.1,463.8 400.0,463.2 402.0,470.0 407.2,465.2 405.0,464.6 409.4,448.4" fill="#9a9a9a" />
<polygon points="854.2,654.0 854.2,684.0 851.8,684.0 855.5,690.0 859.2,684.0 856.8,684.0 856.8,654.0" fill="#6d6d6d" />
<polygon points="859.8,663.1 849.5,676.3 847.7,675.0 847.0,682.0 853.6,679.5 851.9,678.2 862.2,664.9" fill="#8a8a8a" />
<polygon points="905.3,692.3 891.2,689.6 891.7,687.0 884.0,690.0 890.1,695.6 890.5,693.0 904.7,695.7" fill="#cfcfcf" />
<path d="M857 651q11 2 12 20" stroke="#a8a8a8" stroke-width="2.6" fill="none"/>
<polyline points="900.0,677.0 917.0,683.0" fill="none" stroke="#ccc" stroke-width="0.8" stroke-dasharray="3 2"/>
<polygon points="367.5,690.0 380.2,700.0 378.6,701.9 388.0,703.0 384.8,694.1 383.3,696.1 370.5,686.0" fill="#dcdcdc" />
<polygon points="373.3,711.3 368.3,702.5 370.2,701.4 364.0,698.0 363.7,705.1 365.7,704.0 370.7,712.7" fill="#8e8e8e" />
<polygon points="376.0,709.0 386.0,709.0 386.0,710.7 392.0,707.0 386.0,703.3 386.0,705.0 376.0,705.0" fill="#b5b5b5" />
<polygon points="521.1,912.0 521.1,934.0 517.7,934.0 522.0,941.0 526.3,934.0 522.9,934.0 522.9,912.0" fill="#777" />
<path d="M508 889q2 12 24 15" stroke="#9a9a9a" stroke-width="2.6" fill="none"/><path d="M512 890l-7 -1l6 -3z" fill="#bbb"/>
<polygon points="781.5,881.5 769.5,893.6 767.9,892.0 766.0,900.0 774.0,898.1 772.4,896.5 784.5,884.5" fill="#9a9a9a" />
<polygon points="790.8,911.3 777.2,896.0 778.6,894.7 773.0,893.0 774.0,898.8 775.5,897.5 789.2,912.7" fill="#aaa" />
<rect x="410" y="428.7" width="35.0" height="12.1" fill="rgba(186,186,186,0.88)"/>
<text x="427.5" y="438.6" text-anchor="middle" font-size="11" fill="#222" font-family="Liberation Sans,sans-serif">-10.11</text>
<rect x="375.8" y="434.2" width="30.0" height="10.8" fill="rgba(186,186,186,0.88)"/>
<text x="390.8" y="443.5" text-anchor="middle" font-size="11" fill="#222" font-family="Liberation Sans,sans-serif">45.05</text>
<rect x="375.8" y="444.2" width="24.2" height="9.4" fill="rgba(186,186,186,0.88)"/>
<text x="387.9" y="452.8" text-anchor="middle" font-size="11" fill="#222" font-family="Liberation Sans,sans-serif">0.00</text>
<rect x="390.8" y="463.3" width="27.5" height="13.4" fill="rgba(186,186,186,0.88)"/>
<text x="404.6" y="473.9" text-anchor="middle" font-size="11" fill="#222" font-family="Liberation Sans,sans-serif">0.28</text>
<rect x="730.8" y="376.7" width="28.4" height="13.3" fill="rgba(186,186,186,0.88)"/>
<text x="745.0" y="387.2" text-anchor="middle" font-size="11" fill="#222" font-family="Liberation Sans,sans-serif">-0.62</text>
<rect x="790" y="369.2" width="31.7" height="14.1" fill="rgba(186,186,186,0.88)"/>
<text x="805.9" y="380.1" text-anchor="middle" font-size="11" fill="#222" font-family="Liberation Sans,sans-serif">34.85</text>
<rect x="760.8" y="388.3" width="25.9" height="13.4" fill="rgba(186,186,186,0.88)"/>
<text x="773.8" y="398.9" text-anchor="middle" font-size="11" fill="#222" font-family="Liberation Sans,sans-serif">2.98</text>
<rect x="856.2" y="632.2" width="35.8" height="13.1" fill="rgba(186,186,186,0.88)"/>
<text x="874.1" y="642.6" text-anchor="middle" font-size="11" fill="#222" font-family="Liberation Sans,sans-serif">-18.85</text>
<rect x="869.2" y="644.2" width="25.5" height="13.8" fill="rgba(186,186,186,0.88)"/>
<text x="882.0" y="655.0" text-anchor="middle" font-size="11" fill="#222" font-family="Liberation Sans,sans-serif">4.23</text>
<rect x="895.3" y="661.3" width="29.7" height="13.4" fill="rgba(186,186,186,0.88)"/>
<text x="910.1" y="671.9" text-anchor="middle" font-size="11" fill="#222" font-family="Liberation Sans,sans-serif">-1.63</text>
<rect x="864.2" y="669.2" width="35.0" height="13.3" fill="rgba(186,186,186,0.88)"/>
<text x="881.7" y="679.8" text-anchor="middle" font-size="11" fill="#222" font-family="Liberation Sans,sans-serif">31.67</text>
<rect x="916.7" y="673.8" width="35.5" height="14.0" fill="rgba(186,186,186,0.88)"/>
<text x="934.5" y="684.7" text-anchor="middle" font-size="11" fill="#222" font-family="Liberation Sans,sans-serif">-21.98</text>
<rect x="378.3" y="659.2" width="29.2" height="14.1" fill="rgba(186,186,186,0.88)"/>
<text x="392.9" y="670.1" text-anchor="middle" font-size="11" fill="#222" font-family="Liberation Sans,sans-serif">-6.93</text>
<rect x="362.5" y="685" width="25.0" height="14.2" fill="rgba(186,186,186,0.88)"/>
<text x="375.0" y="696.0" text-anchor="middle" font-size="11" fill="#222" font-family="Liberation Sans,sans-serif">0.29</text>
<rect x="404.2" y="690.8" width="25.8" height="14.2" fill="rgba(186,186,186,0.88)"/>
<text x="417.1" y="701.8" text-anchor="middle" font-size="11" fill="#222" font-family="Liberation Sans,sans-serif">0.30</text>
<rect x="347.5" y="698.3" width="25.0" height="13.7" fill="rgba(186,186,186,0.88)"/>
<text x="360.0" y="709.0" text-anchor="middle" font-size="11" fill="#222" font-family="Liberation Sans,sans-serif">8.67</text>
<rect x="345" y="716.7" width="31.7" height="11.1" fill="rgba(186,186,186,0.88)"/>
<text x="360.9" y="726.1" text-anchor="middle" font-size="11" fill="#222" font-family="Liberation Sans,sans-serif">-32.44</text>
<rect x="511.3" y="886.3" width="32.9" height="11.5" fill="rgba(186,186,186,0.88)"/>
<text x="527.8" y="895.9" text-anchor="middle" font-size="11" fill="#222" font-family="Liberation Sans,sans-serif">-23.03</text>
<rect x="520.8" y="939.7" width="31.7" height="14.0" fill="rgba(186,186,186,0.88)"/>
<text x="536.6" y="950.6" text-anchor="middle" font-size="11" fill="#222" font-family="Liberation Sans,sans-serif">46.68</text>
<rect x="765" y="839.4" width="30.4" height="13.3" fill="rgba(186,186,186,0.88)"/>
<text x="780.2" y="849.9" text-anchor="middle" font-size="11" fill="#222" font-family="Liberation Sans,sans-serif">10.56</text>
<rect x="790.5" y="906.3" width="35.1" height="13.5" fill="rgba(186,186,186,0.88)"/>
<text x="808.0" y="916.9" text-anchor="middle" font-size="11" fill="#222" font-family="Liberation Sans,sans-serif">-21.93</text>
</svg>
<!--VIEWPORT_END-->
<!--TREE_START-->
<div class="abs" style="left:0;top:161px;width:1px;height:839px;background:#555"></div>
<div class="abs" style="left:1269.5px;top:161px;width:7px;height:839px;background:#c9c9c9"></div>
<div class="abs" style="left:985.3px;top:161px;width:23.4px;height:31.5px;background:#ececec"></div>
<div class="abs" style="left:1130.8px;top:161px;width:33px;height:31.5px;background:#ececec"></div>
<div class="abs" style="left:1025.4px;top:163px;width:1px;height:27.5px;background:#c9c9c9"></div>
<svg class="abs" style="left:950px;top:160px" width="320" height="40" viewBox="950 160 320 40"><path d="M966.3 174.10000000000002L962.3 170.10000000000002M966.5 170.10000000000002H962.3V174.3" stroke="#1e1e1e" stroke-width="1.5" fill="none" /><path d="M972.7 174.10000000000002L976.7 170.10000000000002M972.5 170.10000000000002H976.7V174.3" stroke="#1e1e1e" stroke-width="1.5" fill="none" /><path d="M966.3 180.5L962.3 184.5M966.5 184.5H962.3V180.3" stroke="#1e1e1e" stroke-width="1.5" fill="none" /><path d="M972.7 180.5L976.7 184.5M972.5 184.5H976.7V180.3" stroke="#1e1e1e" stroke-width="1.5" fill="none" /><path d="M989.2 169.2H999.6V176M995.5 179.4H989.2V169.2" stroke="#1e1e1e" stroke-width="1.4" fill="none" /><circle cx="999.4" cy="179.4" r="3.2" stroke="#1e1e1e" stroke-width="1.3" fill="none"/><path d="M1001.8 181.8L1005.4 185.6" stroke="#1e1e1e" stroke-width="1.4" fill="none" /><path d="M1013.4 174.8L1017.2 178.6L1021 174.8" stroke="#333" stroke-width="1.3" fill="none" /><path d="M1034.7 168.6V181.6H1046.4M1031.6 171.8H1043.4V184.6" stroke="#cfcfcf" stroke-width="1.4" fill="none" /><path d="M1054.4 174.8L1058.2 178.6L1062 174.8" stroke="#555" stroke-width="1.3" fill="none" /><path d="M1074.5 173.8L1078.6 169.6L1090.4 169.6L1090.4 180.0L1086.3 184.2L1074.5 184.2ZM1074.5 173.8L1086.3 173.8L1090.4 169.6M1086.3 173.8L1086.3 184.2" stroke="#1e1e1e" stroke-width="1.5" fill="none" /><path d="M1078.6 169.6L1078.6 180.0L1090.4 180.0M1078.6 180.0L1074.5 184.2" stroke="#1e1e1e" stroke-width="0.9" fill="none" /><path d="M1106.5 173.8L1110.6 169.6L1122.4 169.6L1122.4 180.0L1118.3 184.2L1106.5 184.2Z" fill="#b5b5b5"/><path d="M1106.5 173.8L1110.6 169.6L1122.4 169.6L1122.4 180.0L1118.3 184.2L1106.5 184.2ZM1106.5 173.8L1118.3 173.8L1122.4 169.6M1118.3 173.8L1118.3 184.2" stroke="#1e1e1e" stroke-width="1.5" fill="none" /><path d="M1110.6 169.6L1110.6 180.0L1122.4 180.0M1110.6 180.0L1106.5 184.2" stroke="#1e1e1e" stroke-width="0.9" fill="none" /><path d="M1138.5 173.8L1142.6 169.6L1154.4 169.6L1154.4 180.0L1150.3 184.2L1138.5 184.2Z" fill="#000" stroke="#000" stroke-width="1.2"/><path d="M1138.5 173.8L1150.3 173.8L1154.4 169.6M1150.3 173.8L1150.3 184.2" stroke="#fff" stroke-width="0.5" fill="none" /><path d="M1172.3 174.4L1176.3 182L1187.4 177.2V172L1183.4 171.2L1172.3 174.4ZM1176.3 182V176.8L1172.3 174.4M1176.3 176.8L1187.4 172" stroke="#1e1e1e" stroke-width="1.4" fill="none" /><path d="M1209.8 168.5V185.5M1212.4 168.5V185.5" stroke="#cfcfcf" stroke-width="1" fill="none" /><path d="M1205.5 175A8 3.4 0 1 0 1216.5 175" stroke="#cfcfcf" stroke-width="1.2" fill="none" /><path d="M1204.6 180L1207.8 176.6L1209 181Z" stroke="#cfcfcf" stroke-width="1" fill="#cfcfcf" /><path d="M1236.2 178.2L1244 170.8L1251.8 178.2M1238.4 176.4V184.4H1242.2V179.6H1245.8V184.4H1249.6V176.4" stroke="#1e1e1e" stroke-width="1.5" fill="none" /></svg>
<div class="abs" style="left:984px;top:207px;font-size:11.6px;font-weight:bold;line-height:16px;white-space:nowrap;color:#e97426">Production cost<span style="color:#777;font-weight:normal;margin:0 6px 0 6px">-</span><span style="color:#111">1024 US$</span></div>
<svg class="abs" style="left:1170px;top:215px" width="95" height="75" viewBox="1170 215 95 75">
<ellipse cx="1214" cy="264.5" rx="34" ry="16" fill="none" stroke="#e3e3e3" stroke-width="7.5"/>
<path d="M1179 252L1187 249M1245 270.5L1253.5 273.5M1189 283.5L1192.5 288L1198 284" stroke="#bdbdbd" stroke-width="1.2" fill="none"/>
<path d="M1208.2 223.2L1237.8 229.8L1235.8 258.6L1221.3 277.5L1190.9 265.6L1187.6 234.7Z" fill="#a3a3a3"/>
<path d="M1208.2 223.2L1237.8 229.8L1222.2 243.3L1187.6 234.7Z" fill="#a9a9a9"/>
<path d="M1222.2 243.3L1237.8 229.8L1235.8 258.6L1221.3 277.5Z" fill="#9a9a9a"/>
<path d="M1208.2 223.2L1237.8 229.8L1235.8 258.6L1221.3 277.5L1190.9 265.6L1187.6 234.7ZM1187.6 234.7L1222.2 243.3L1237.8 229.8M1222.2 243.3L1221.3 277.5M1208.2 223.2L1208.6 250.8L1190.9 265.6M1208.6 250.8L1235.8 258.6" fill="none" stroke="#222" stroke-width="1"/>
<text x="1202" y="260" font-size="7" fill="#ddd" font-family="Liberation Sans,sans-serif">-Y</text>
</svg>
<div class="abs" style="left:1126px;top:294px;width:129px;height:20.5px;background:#e97426"></div>
<div class="abs tb" style="left:1131.5px;top:296px;color:#fff">CON1</div>
<svg class="abs" style="left:1113px;top:301.5px" width="7" height="7"><path d="M6 0.5V6H0.5Z" fill="#444"/></svg>
<svg class="abs" style="left:1133px;top:324.5px" width="7" height="7"><path d="M6 0.5V6H0.5Z" fill="#444"/></svg>
<div class="abs tb" style="left:1152px;top:318px;color:#3a3a3a">Members</div>
<div class="abs" style="left:1152.2px;top:345.8px;width:9.2px;height:8.8px;background:#e4e4e4"></div>
<svg class="abs" style="left:1151px;top:340px" width="17" height="17"><path d="M3.7 10L7.1 14L14.1 4.2" stroke="#f09a2c" stroke-width="2.1" fill="none"/></svg>
<div class="abs ti" style="left:1173px;top:341px;text-decoration:underline">Col</div>
<div class="abs" style="left:1152.2px;top:367.8px;width:9.2px;height:8.8px;background:#e4e4e4"></div>
<svg class="abs" style="left:1151px;top:362px" width="17" height="17"><path d="M3.7 10L7.1 14L14.1 4.2" stroke="#f09a2c" stroke-width="2.1" fill="none"/></svg>
<div class="abs ti" style="left:1173px;top:363px">Beam1</div>
<div class="abs" style="left:1152.2px;top:389.8px;width:9.2px;height:8.8px;background:#e4e4e4"></div>
<svg class="abs" style="left:1151px;top:384px" width="17" height="17"><path d="M3.7 10L7.1 14L14.1 4.2" stroke="#f09a2c" stroke-width="2.1" fill="none"/></svg>
<div class="abs ti" style="left:1173px;top:385px">Diag2</div>
<div class="abs" style="left:1152.2px;top:411.8px;width:9.2px;height:8.8px;background:#e4e4e4"></div>
<svg class="abs" style="left:1151px;top:406px" width="17" height="17"><path d="M3.7 10L7.1 14L14.1 4.2" stroke="#f09a2c" stroke-width="2.1" fill="none"/></svg>
<div class="abs ti" style="left:1173px;top:407px">Beam2</div>
<div class="abs" style="left:1152.2px;top:433.8px;width:9.2px;height:8.8px;background:#e4e4e4"></div>
<svg class="abs" style="left:1151px;top:428px" width="17" height="17"><path d="M3.7 10L7.1 14L14.1 4.2" stroke="#f09a2c" stroke-width="2.1" fill="none"/></svg>
<div class="abs ti" style="left:1173px;top:429px">Diag1</div>
<div class="abs" style="left:1152.2px;top:455.8px;width:9.2px;height:8.8px;background:#e4e4e4"></div>
<svg class="abs" style="left:1151px;top:450px" width="17" height="17"><path d="M3.7 10L7.1 14L14.1 4.2" stroke="#f09a2c" stroke-width="2.1" fill="none"/></svg>
<div class="abs ti" style="left:1173px;top:451px">Diag3</div>
<svg class="abs" style="left:1133px;top:478.0px" width="7" height="7"><path d="M6 0.5V6H0.5Z" fill="#444"/></svg>
<div class="abs tb" style="left:1152px;top:471.5px;color:#3a3a3a">Load effects</div>
<div class="abs" style="left:1152.2px;top:499.8px;width:9.2px;height:8.8px;background:#e4e4e4"></div>
<svg class="abs" style="left:1151px;top:494px" width="17" height="17"><path d="M3.7 10L7.1 14L14.1 4.2" stroke="#f09a2c" stroke-width="2.1" fill="none"/></svg>
<div class="abs ti" style="left:1173px;top:495px">LE2</div>
<svg class="abs" style="left:1133px;top:522.0px" width="7" height="7"><path d="M6 0.5V6H0.5Z" fill="#444"/></svg>
<div class="abs tb" style="left:1152px;top:515.5px;color:#3a3a3a">Operations</div>
<div class="abs" style="left:1152.2px;top:543.8px;width:9.2px;height:8.8px;background:#e4e4e4"></div>
<svg class="abs" style="left:1151px;top:538px" width="17" height="17"><path d="M3.7 10L7.1 14L14.1 4.2" stroke="#f09a2c" stroke-width="2.1" fill="none"/></svg>
<div class="abs ti" style="left:1173px;top:539px">EP1</div>
<div class="abs" style="left:1152.2px;top:565.8px;width:9.2px;height:8.8px;background:#e4e4e4"></div>
<svg class="abs" style="left:1151px;top:560px" width="17" height="17"><path d="M3.7 10L7.1 14L14.1 4.2" stroke="#f09a2c" stroke-width="2.1" fill="none"/></svg>
<div class="abs ti" style="left:1173px;top:561px">CPL1</div>
<div class="abs" style="left:1152.2px;top:587.8px;width:9.2px;height:8.8px;background:#e4e4e4"></div>
<svg class="abs" style="left:1151px;top:582px" width="17" height="17"><path d="M3.7 10L7.1 14L14.1 4.2" stroke="#f09a2c" stroke-width="2.1" fill="none"/></svg>
<div class="abs ti" style="left:1173px;top:583px">CLEAT1</div>
<div class="abs" style="left:1152.2px;top:609.8px;width:9.2px;height:8.8px;background:#e4e4e4"></div>
<svg class="abs" style="left:1151px;top:604px" width="17" height="17"><path d="M3.7 10L7.1 14L14.1 4.2" stroke="#f09a2c" stroke-width="2.1" fill="none"/></svg>
<div class="abs ti" style="left:1173px;top:605px">STUB1</div>
<div class="abs" style="left:1152.2px;top:631.8px;width:9.2px;height:8.8px;background:#e4e4e4"></div>
<svg class="abs" style="left:1151px;top:626px" width="17" height="17"><path d="M3.7 10L7.1 14L14.1 4.2" stroke="#f09a2c" stroke-width="2.1" fill="none"/></svg>
<div class="abs ti" style="left:1173px;top:627px">CUT2</div>
<div class="abs" style="left:1152.2px;top:653.8px;width:9.2px;height:8.8px;background:#e4e4e4"></div>
<svg class="abs" style="left:1151px;top:648px" width="17" height="17"><path d="M3.7 10L7.1 14L14.1 4.2" stroke="#f09a2c" stroke-width="2.1" fill="none"/></svg>
<div class="abs ti" style="left:1173px;top:649px">CPL2</div>
<!--TREE_END-->
<!--RIGHTPANEL_START-->
<div class="abs" style="left:1276.5px;top:161px;width:643.5px;height:24.6px;background:#e97426"></div>
<div class="abs tb" style="left:1286.5px;top:166.5px;color:#fff">CON1</div>
<svg class="abs" style="left:1293px;top:208px" width="11" height="9"><path d="M0.3 0.3H10L5.2 8Z" fill="#e97426"/></svg>
<div class="abs" style="left:1320.5px;top:203px;font-size:14.4px;font-weight:bold;color:#e97426;line-height:19px;white-space:nowrap">Project item</div>
<div class="abs" style="left:1310.8px;top:304.3px;width:126px;height:22.2px;background:#e97426"></div>
<div class="abs tb" style="left:1320.5px;top:232.10000000000002px;color:#1c1c1c">Name</div>
<div class="abs tb" style="left:1320.5px;top:257.3px;color:#1c1c1c">Description</div>
<div class="abs tb" style="left:1320.5px;top:282.5px;color:#1c1c1c">Design code edition</div>
<div class="abs tb" style="left:1320.5px;top:307.7px;color:#fff">Analysis type</div>
<div class="abs tb" style="left:1320.5px;top:333.3px;color:#1c1c1c">Report</div>
<div class="abs" style="left:1441.2px;top:228.4px;width:467.4px;height:22.2px;background:#f1f1f1"></div>
<div class="abs" style="left:1441.2px;top:253px;width:467.4px;height:22.8px;background:#f1f1f1"></div>
<div class="abs" style="left:1442.6px;top:279px;width:466px;height:22.3px;background:#e4e4e4"></div>
<div class="abs" style="left:1442.6px;top:304.2px;width:466px;height:22.3px;background:#e4e4e4"></div>
<div class="abs" style="left:1446px;top:232px;font-size:11.8px;line-height:16px;color:#111;font-weight:bold;white-space:nowrap;letter-spacing:-0.3px">CON1</div>
<div class="abs dd" style="left:1448.6px;top:282.4px">AISC 360-16 (LRFD)</div>
<div class="abs dd" style="left:1448.6px;top:307.6px">Stress, strain</div>
<svg class="abs" style="left:1896.5px;top:288.4px" width="8" height="6"><path d="M0.2 0.2H7.4L3.8 5Z" fill="#111"/></svg>
<svg class="abs" style="left:1896.5px;top:313.2px" width="8" height="6"><path d="M0.2 0.2H7.4L3.8 5Z" fill="#111"/></svg>
<div class="abs" style="left:1908px;top:327.5px;width:1px;height:23px;background:#777"></div>
<div class="abs" style="left:1442.2px;top:327px;width:465.8px;height:114.4px;background:#e4e4e4;border:1px solid #6a6a6a"></div>
<div class="abs" style="left:1443.2px;top:328px;width:463.8px;height:18.6px;background:#b0b0b0"></div>
<div class="abs" style="left:1443.2px;top:384.4px;width:463.8px;height:18.4px;background:#b0b0b0"></div>
<div class="abs dd" style="left:1447.2px;top:330.7px;color:#2a2a2a">Stress, strain</div>
<div class="abs dd" style="left:1447.2px;top:349.5px;color:#2a2a2a">Stiffness</div>
<div class="abs dd" style="left:1447.2px;top:368.3px;color:#2a2a2a">Capacity design</div>
<div class="abs dd" style="left:1447.2px;top:387.0px;color:#2a2a2a">Joint design resistance</div>
<div class="abs dd" style="left:1447.2px;top:405.8px;color:#2a2a2a">Fatigue</div>
<div class="abs dd" style="left:1447.2px;top:424.6px;color:#2a2a2a">Fire resistance</div>
<!--RIGHTPANEL_END-->
<!--ANNOT_START-->
<div class="abs" style="left:104.4px;top:52.6px;width:45.4px;height:85.2px;border:4.4px solid #e84749;border-radius:9px"></div>
<div class="abs" style="left:1102.2px;top:284px;width:168px;height:37.2px;border:4.4px solid #e84749;border-radius:9px"></div>
<div class="abs" style="left:1434px;top:382.4px;width:207.8px;height:27.4px;border:4.2px solid #e84749;border-radius:6.5px"></div>
<svg class="abs" style="left:1260px;top:310px" width="170" height="100" viewBox="1260 310 170 100">
<path d="M1267.6 320.8L1384 379.6" stroke="#e84749" stroke-width="8.4" stroke-dasharray="9.2 10.25" fill="none"/>
<path d="M1394.6 372L1414.6 396.4L1382.4 396.6L1390.6 386.2L1388.6 384.6Z" fill="#e84749"/>
</svg>
<!--ANNOT_END-->
<!-- STATUS -->
<div id="status" class="abs" style="background:#0a0a0a"></div>
<svg class="abs" style="left:0;top:1000px" width="1920" height="32"><defs><linearGradient id="sg" x1="0" x2="1" y1="0" y2="0"><stop offset="0" stop-color="#000" stop-opacity=".5"/><stop offset=".15" stop-color="#000" stop-opacity=".1"/><stop offset=".6" stop-color="#000" stop-opacity=".1"/><stop offset=".8" stop-color="#000" stop-opacity=".6"/><stop offset="1" stop-color="#000" stop-opacity=".9"/></linearGradient></defs>
<rect width="1920" height="34" filter="url(#bm)"/><rect width="1920" height="34" fill="url(#sg)"/><rect width="1920" height="1.5" fill="#000"/></svg>
<div class="st k" style="left:24px">Design code:</div><div class="st v" style="left:102px">AISC - LRFD (2016)</div>
<div class="st k" style="left:228px">Analysis:</div><div class="st v" style="left:283px">Stress, strain</div>
<div class="st k" style="left:376px">Load effects:</div><div class="st v" style="left:453px">In equilibrium</div>
<div class="st k" style="left:553px">Units:</div><div class="st v" style="left:594px">in</div>
<div class="st" style="left:1800px;font-weight:normal;color:#e97426;font-size:11.7px">www.<span style="color:#eee">ideastatica</span>.com</div>
</div>
</body>
</html>
